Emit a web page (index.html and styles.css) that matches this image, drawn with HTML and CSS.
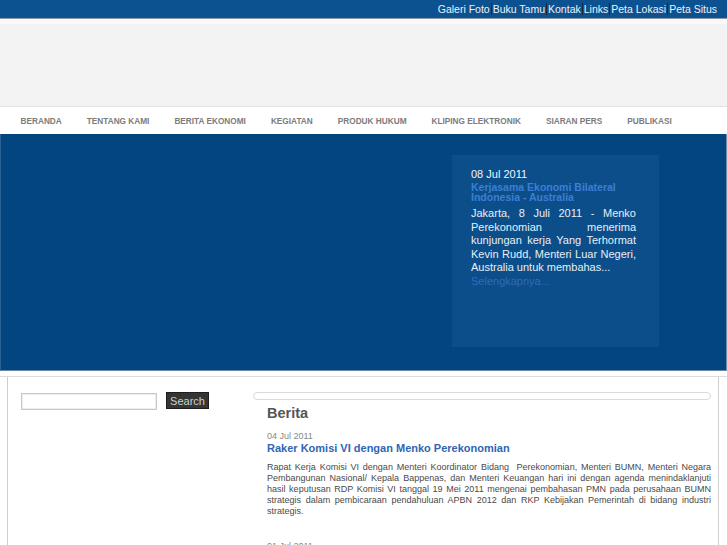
FILE: index.html
```html
<!DOCTYPE html>
<html>
<head>
<meta charset="utf-8">
<link rel="stylesheet" href="styles.css">
</head>
<body>
<div class="topbar">
  <a href="#">Galeri Foto</a><a href="#">Buku Tamu</a><a href="#">Kontak</a><a href="#">Links</a><a href="#">Peta Lokasi</a><a href="#">Peta Situs</a>
</div>
<div class="header"></div>
<nav class="nav">
  <a href="#">BERANDA</a>
  <a href="#">TENTANG KAMI</a>
  <a href="#">BERITA EKONOMI</a>
  <a href="#">KEGIATAN</a>
  <a href="#">PRODUK HUKUM</a>
  <a href="#">KLIPING ELEKTRONIK</a>
  <a href="#">SIARAN PERS</a>
  <a href="#">PUBLIKASI</a>
</nav>
<div class="banner">
  <div class="card">
    <div class="card-date">08 Jul 2011</div>
    <a class="card-title" href="#">Kerjasama Ekonomi Bilateral Indonesia - Australia</a>
    <p class="card-text">Jakarta, 8 Juli 2011 - Menko Perekonomian menerima kunjungan kerja Yang Terhormat Kevin Rudd, Menteri Luar Negeri, Australia untuk membahas...</p>
    <a class="card-more" href="#">Selengkapnya...</a>
  </div>
</div>
<div class="content">
  <div class="inner">
    <aside class="sidebar">
      <form class="search">
        <input class="search-input" type="text">
        <button class="search-btn" type="button">Search</button>
      </form>
    </aside>
    <main class="main">
      <div class="pill"></div>
      <div class="news">
        <h2 class="news-head">Berita</h2>
        <div class="item">
          <div class="item-date">04 Jul 2011</div>
          <a class="item-title" href="#">Raker Komisi VI dengan Menko Perekonomian</a>
          <p class="item-text">Rapat Kerja Komisi VI dengan Menteri Koordinator Bidang &nbsp;Perekonomian, Menteri BUMN, Menteri Negara Pembangunan Nasional/ Kepala Bappenas, dan Menteri Keuangan hari ini dengan agenda menindaklanjuti hasil keputusan RDP Komisi VI tanggal 19 Mei 2011 mengenai pembahasan PMN pada perusahaan BUMN strategis dalam pembicaraan pendahuluan APBN 2012 dan RKP Kebijakan Pemerintah di bidang industri strategis.</p>
        </div>
        <div class="item">
          <div class="item-date">01 Jul 2011</div>
        </div>
      </div>
    </main>
  </div>
</div>
</body>
</html>
```
FILE: styles.css
```css
html, body {
  margin: 0;
  padding: 0;
  background: #fff;
  font-family: "Liberation Sans", Arial, sans-serif;
}
a { text-decoration: none; }

.topbar {
  height: 18px;
  background: #0c5190;
  border-bottom: 1px solid #8f9aa6;
  display: flex;
  justify-content: flex-end;
  align-items: center;
  padding-right: 9px;
}
.topbar a {
  color: #eef2f7;
  font-size: 10.5px;
  line-height: 12px;
  padding: 0 1px;
  border-left: 1px solid #1a2633;
}
.topbar a:first-child { border-left: none; }

.header {
  height: 82px;
  background: #f3f3f3;
  border-top: 5px solid #f9f9f9;
  border-bottom: 1px solid #e2e2e2;
}

.nav {
  height: 27px;
  box-sizing: border-box;
  padding: 2px 0 0 8px;
  background: #fff;
  display: flex;
  align-items: center;
}
.nav a {
  font-size: 8.25px;
  font-weight: bold;
  color: #7c7c7c;
  padding: 0 12.5px;
}

.banner {
  height: 237px;
  background: #03457f;
  border-left: 1px solid #2d5f90;
  border-right: 1px solid #6f8cab;
  border-bottom: 1px solid #6a89ab;
  display: flex;
  justify-content: flex-end;
  padding: 21px 67px 0 0;
  box-sizing: border-box;
}
.card {
  width: 207px;
  height: 192px;
  background: #0b4e8a;
  box-sizing: border-box;
  padding: 13px 23px 0 19px;
  font-size: 11px;
}
.card-date {
  color: #f2f5f9;
  line-height: 13px;
}
.card-title {
  display: block;
  margin-top: 1px;
  color: #3c7fd4;
  font-weight: bold;
  font-size: 10.5px;
  line-height: 10px;
}
.card-text {
  margin: 5px 0 0;
  color: #e8eef5;
  line-height: 13.5px;
  text-align: justify;
}
.card-more {
  display: block;
  margin-top: 0;
  color: #2f6cbb;
  line-height: 13px;
}

.content {
  margin-top: 5px;
  border-top: 1px solid #dcdcdc;
}
.inner {
  margin: 0 8px 0 7px;
  border-left: 1px solid #cfcfcf;
  border-right: 1px solid #cfcfcf;
  display: flex;
  height: 170px;
}
.sidebar {
  width: 245px;
  flex-shrink: 0;
  padding: 15px 0 0 13px;
  box-sizing: border-box;
}
.search {
  display: flex;
  gap: 9px;
  margin: 0;
  align-items: flex-start;
}
.search-input {
  width: 136px;
  height: 17px;
  box-sizing: border-box;
  border: 1px solid #c8c8c8;
  box-shadow: inset 0 0 0 1px #eee;
  margin: 1px 0 0;
  padding: 0;
}
.search-btn {
  width: 43px;
  height: 17px;
  box-sizing: border-box;
  background: #353535;
  border: 1px solid #1e1e1e;
  color: #cfcfcf;
  font-family: "Liberation Sans", Arial, sans-serif;
  font-size: 11px;
  padding: 0;
  margin: 0;
}

.main {
  flex: 1;
  padding: 15px 7px 0 0;
}
.pill {
  height: 8px;
  border: 1px solid #dadada;
  border-radius: 4px;
  box-sizing: border-box;
}
.news {
  padding: 0 0 0 14px;
}
.news-head {
  margin: 4px 0 0;
  font-size: 14.5px;
  line-height: 18px;
  color: #555;
}
.item { margin-top: 9px; }
.item + .item { margin-top: 24px; }
.item-date {
  font-size: 9px;
  line-height: 11px;
  color: #888;
}
.item-title {
  display: block;
  font-size: 11px;
  font-weight: bold;
  line-height: 13px;
  color: #2f66b5;
}
.item-text {
  margin: 7px 0 0;
  font-size: 9px;
  line-height: 11px;
  color: #4a4a4a;
  text-align: justify;
}
```
